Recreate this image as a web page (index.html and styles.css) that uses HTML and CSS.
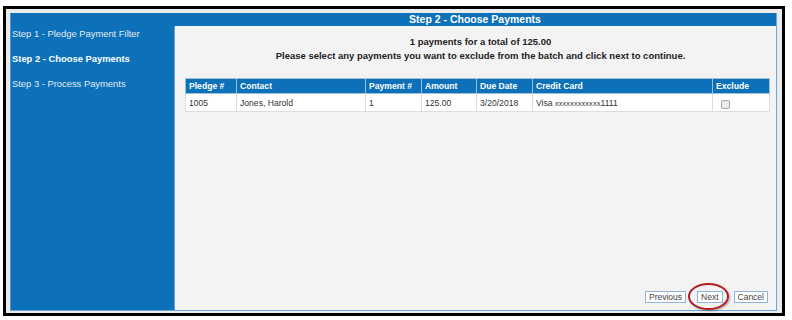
FILE: index.html
```html
<!DOCTYPE html>
<html lang="en">

<head>
    <meta charset="UTF-8">
    <meta name="viewport" content="width=device-width, initial-scale=1.0">
    <title>Pledge Payments - Choose Payments</title>
    <link rel="stylesheet" href="styles.css">
</head>

<body>
    <div class="frame">
        <div class="wizard">
            <div class="steps">
                <p class="step">Step 1 - Pledge Payment Filter</p>
                <p class="step active">Step 2 - Choose Payments</p>
                <p class="step">Step 3 - Process Payments</p>
            </div>
            <div class="panel">
                <div class="panel-title">Step 2 - Choose Payments</div>
                <div class="panel-body">
                    <p class="summary">1 payments for a total of 125.00</p>
                    <p class="summary">Please select any payments you want to exclude from the batch and click next to continue.</p>

                    <table class="grid">
                        <thead>
                            <tr>
                                <th class="c-pledge">Pledge #</th>
                                <th class="c-contact">Contact</th>
                                <th class="c-payment">Payment #</th>
                                <th class="c-amount">Amount</th>
                                <th class="c-due">Due Date</th>
                                <th class="c-card">Credit Card</th>
                                <th class="c-exclude">Exclude</th>
                            </tr>
                        </thead>
                        <tbody>
                            <tr>
                                <td>1005</td>
                                <td>Jones, Harold</td>
                                <td>1</td>
                                <td>125.00</td>
                                <td>3/20/2018</td>
                                <td>Visa <span class="mask">xxxxxxxxxxxx</span>1111</td>
                                <td><input type="checkbox" class="check"></td>
                            </tr>
                        </tbody>
                    </table>

                    <div class="actions">
                        <button class="btn">Previous</button>
                        <span class="highlight">
                            <button class="btn">Next</button>
                            <span class="ring"></span>
                        </span>
                        <button class="btn">Cancel</button>
                    </div>
                </div>
            </div>
        </div>
    </div>
</body>

</html>
```

FILE: styles.css
```css
* {
    font-family: "Liberation Sans", Arial, sans-serif;
    margin: 0;
    box-sizing: border-box;
}

body {
    background: #ffffff;
}

.frame {
    width: 782px;
    height: 310px;
    margin: 6px 0 0 3px;
    border: 3px solid #000000;
    background: #ececec;
    padding: 4px 5px 2px 4px;
}

.wizard {
    height: 298px;
    display: flex;
    border-bottom: 1px solid #6aa6dc;
}

.steps {
    width: 165px;
    background: #0c71b9;
    border-left: 1px solid #4e96d2;
    padding-top: 15px;
    display: flex;
    flex-direction: column;
    gap: 14px;
}

.step {
    font-size: 9.4px;
    line-height: 11px;
    color: #e2eaf2;
    padding-left: 1px;
}

.step.active {
    color: #ffffff;
    font-weight: bold;
}

.panel {
    flex: 1;
    display: flex;
    flex-direction: column;
}

.panel-title {
    height: 13px;
    background: #0c71b9;
    color: #ffffff;
    font-size: 10.5px;
    font-weight: bold;
    line-height: 13px;
    text-align: center;
    border-right: 1px solid #6aa6dc;
}

.panel-body {
    flex: 1;
    background: #f3f3f3;
    border-left: 1px solid #6aa6dc;
    border-right: 1px solid #6aa6dc;
    padding: 9px 6px 7px 10px;
    display: flex;
    flex-direction: column;
}

.summary {
    font-size: 9.5px;
    font-weight: bold;
    line-height: 14px;
    color: #222222;
    text-align: center;
    padding-left: 6px;
}

.grid {
    width: 584px;
    margin-top: 15px;
    border-collapse: collapse;
    table-layout: fixed;
    font-size: 8.6px;
}

.grid th {
    background: #0c71b9;
    color: #ffffff;
    font-weight: bold;
    text-align: left;
    height: 15px;
    padding: 0 3px;
    border: 1px solid #9dbfdc;
}

.grid td {
    background: #ffffff;
    color: #333333;
    height: 18px;
    padding: 0 3px;
    border: 1px solid #dddddd;
}

.c-pledge { width: 51px; }
.c-contact { width: 129px; }
.c-payment { width: 56px; }
.c-amount { width: 55px; }
.c-due { width: 56px; }
.c-card { width: 180px; }
.c-exclude { width: 57px; }

.mask {
    font-size: 7.4px;
    letter-spacing: 0.1px;
}

.check {
    appearance: none;
    width: 9px;
    height: 9px;
    margin: 3px 0 0 5px;
    border: 1px solid #a9a9a9;
    border-radius: 2px;
    background: #ececec;
    display: block;
}

.actions {
    margin-top: auto;
    display: flex;
    justify-content: flex-end;
    align-items: center;
    gap: 11px;
    padding-right: 2px;
}

.btn {
    height: 12px;
    padding: 0 3px;
    border: 1px solid #8fb3df;
    background: #ffffff;
    color: #444444;
    font-size: 8.5px;
    line-height: 10px;
    cursor: pointer;
}

.highlight {
    position: relative;
    display: flex;
}

.ring {
    position: absolute;
    left: -9px;
    top: -8px;
    width: 41px;
    height: 27px;
    border: 2px solid #b3191e;
    border-radius: 50%;
    box-shadow: 1px 1px 2px rgba(0, 0, 0, 0.35);
}
```
